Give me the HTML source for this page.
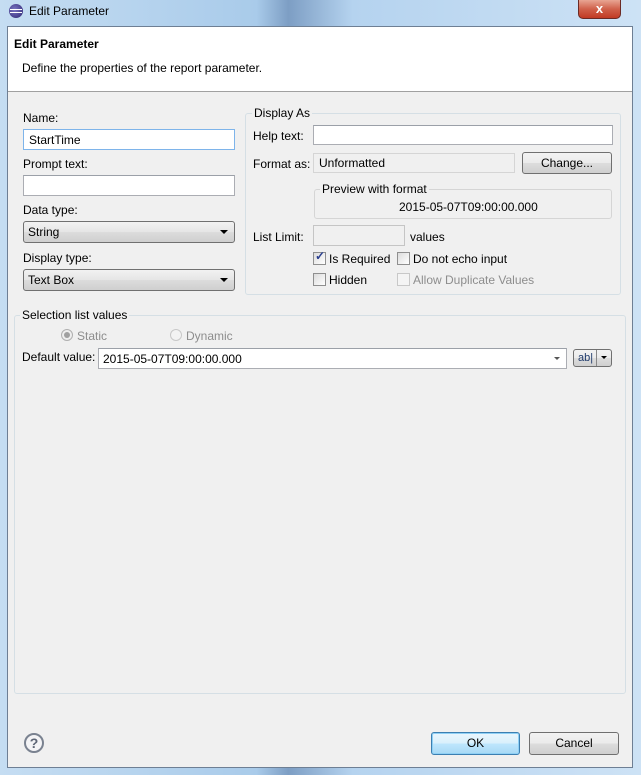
<!DOCTYPE html>
<html><head><style>
*{box-sizing:border-box;margin:0;padding:0}
body{width:641px;height:775px;position:relative;overflow:hidden;font-family:"Liberation Sans",sans-serif;font-size:12px;color:#000;background:#b9d7f0}
.a{position:absolute}
.frame{left:0;top:0;width:641px;height:775px;background:linear-gradient(90deg,#c5ddf2 0%,#a9cbea 40%,#7d9ec4 45%,#b5d3ef 55%,#cde2f5 100%)}
.inner{left:7px;top:26px;width:626px;height:742px;background:#f0f0f0;border:1px solid #6e7f94}
.hdr{left:8px;top:27px;width:624px;height:65px;background:#fff;border-bottom:1px solid #a0a0a0}
.inp{background:#fff;border:1px solid #abadb3;border-top-color:#9ba0a8}
.dis{background:#f0f0f0;border:1px solid #d5d5d5}
.combo{border:1px solid #707070;border-radius:3px;background:linear-gradient(#f2f2f2,#e5e5e5 50%,#dcdcdc 51%,#cfcfcf);padding-left:4px;line-height:20px}
.arr{position:absolute;right:6px;top:8px;width:0;height:0;border-left:4px solid transparent;border-right:4px solid transparent;border-top:4px solid #000}
.grp{border:1px solid #d5dfe5;border-radius:3px}
.leg{background:#f0f0f0;padding:0 2px}
.cb{width:13px;height:13px;border:1px solid #8f8f8f;background:linear-gradient(135deg,#dcdcdc,#fff)}
.btn{border:1px solid #707070;border-radius:3px;background:linear-gradient(#f2f2f2,#ebebeb 50%,#dddddd 51%,#cfcfcf);text-align:center;line-height:20px}
.gray{color:#8d8d8d}
</style></head><body>
<div class="a frame"></div>
<div class="a" style="left:9px;top:4px;width:14px;height:14px;border-radius:50%;background:radial-gradient(circle at 40% 40%,#7b76c4,#2c2470);"></div>
<div class="a" style="left:10px;top:9px;width:12px;height:1px;background:#fff"></div>
<div class="a" style="left:10px;top:12px;width:12px;height:1px;background:#fff"></div>
<div class="a" style="left:29px;top:4px;font-size:12px">Edit Parameter</div>
<div class="a" style="left:578px;top:0;width:43px;height:19px;border:1px solid #6b2a25;border-top:none;border-radius:0 0 5px 5px;background:linear-gradient(#e8a593,#d0614b 50%,#c13a24);color:#fff;font-weight:bold;text-align:center;line-height:17px;font-size:13px">x</div>
<div class="a inner"></div>
<div class="a hdr"></div>
<div class="a" style="left:14px;top:37px;font-weight:bold">Edit Parameter</div>
<div class="a" style="left:22px;top:61px">Define the properties of the report parameter.</div>

<div class="a" style="left:23px;top:111px">Name:</div>
<div class="a inp" style="left:23px;top:129px;width:212px;height:21px;border-color:#7eb4ea;padding:3px 5px">StartTime</div>
<div class="a" style="left:23px;top:157px">Prompt text:</div>
<div class="a inp" style="left:23px;top:175px;width:212px;height:21px"></div>
<div class="a" style="left:23px;top:203px">Data type:</div>
<div class="a combo" style="left:23px;top:221px;width:212px;height:22px">String<div class="arr"></div></div>
<div class="a" style="left:23px;top:251px">Display type:</div>
<div class="a combo" style="left:23px;top:269px;width:212px;height:22px">Text Box<div class="arr"></div></div>

<div class="a grp" style="left:245px;top:113px;width:376px;height:182px"></div>
<div class="a leg" style="left:252px;top:106px">Display As</div>
<div class="a" style="left:253px;top:129px">Help text:</div>
<div class="a inp" style="left:313px;top:125px;width:300px;height:20px"></div>
<div class="a" style="left:253px;top:157px">Format as:</div>
<div class="a dis" style="left:313px;top:153px;width:202px;height:20px;padding:2px 5px">Unformatted</div>
<div class="a btn" style="left:522px;top:152px;width:90px;height:22px">Change...</div>
<div class="a grp" style="left:314px;top:189px;width:298px;height:30px;border-color:#d5d5d5"></div>
<div class="a leg" style="left:320px;top:182px">Preview with format</div>
<div class="a" style="left:399px;top:200px">2015-05-07T09:00:00.000</div>
<div class="a" style="left:253px;top:230px">List Limit:</div>
<div class="a dis" style="left:313px;top:225px;width:92px;height:21px;border-color:#c5c5c5"></div>
<div class="a" style="left:410px;top:230px">values</div>
<div class="a cb" style="left:313px;top:252px"></div>
<div class="a" style="left:315px;top:249px;color:#2a3f8f;font-size:12px;font-weight:bold">✓</div>
<div class="a" style="left:329px;top:252px">Is Required</div>
<div class="a cb" style="left:397px;top:252px"></div>
<div class="a" style="left:413px;top:252px">Do not echo input</div>
<div class="a cb" style="left:313px;top:273px"></div>
<div class="a" style="left:329px;top:273px">Hidden</div>
<div class="a cb" style="left:397px;top:273px;border-color:#c8c8c8;background:#f4f4f4"></div>
<div class="a gray" style="left:413px;top:273px">Allow Duplicate Values</div>

<div class="a grp" style="left:14px;top:315px;width:612px;height:379px"></div>
<div class="a leg" style="left:20px;top:308px">Selection list values</div>
<div class="a" style="left:61px;top:329px;width:12px;height:12px;border-radius:50%;border:1px solid #b0b0b0;background:#eee"></div>
<div class="a" style="left:64px;top:332px;width:6px;height:6px;border-radius:50%;background:#a0a0a0"></div>
<div class="a gray" style="left:77px;top:329px">Static</div>
<div class="a" style="left:170px;top:329px;width:12px;height:12px;border-radius:50%;border:1px solid #c8c8c8;background:#f3f3f3"></div>
<div class="a gray" style="left:186px;top:329px">Dynamic</div>
<div class="a" style="left:22px;top:350px">Default value:</div>
<div class="a inp" style="left:98px;top:348px;width:469px;height:21px;padding:3px 4px">2015-05-07T09:00:00.000</div>
<div class="a" style="left:554px;top:357px;width:0;height:0;border-left:3px solid transparent;border-right:3px solid transparent;border-top:3px solid #555"></div>
<div class="a btn" style="left:573px;top:349px;width:39px;height:18px;line-height:16px;font-size:11px;text-align:left;padding-left:4px;color:#1f3a6b">ab|</div>
<div class="a" style="left:596px;top:350px;width:1px;height:16px;background:#888"></div>
<div class="a" style="left:601px;top:356px;width:0;height:0;border-left:3px solid transparent;border-right:3px solid transparent;border-top:3px solid #000"></div>

<div class="a" style="left:24px;top:733px;width:20px;height:20px;border-radius:50%;border:2px solid #7a8290;background:#f4f4f6;color:#5e6676;font-weight:bold;text-align:center;line-height:16px;font-size:14px">?</div>
<div class="a btn" style="left:431px;top:732px;width:89px;height:23px;border-color:#3c7fb1;background:linear-gradient(#eaf6fd,#d9f0fc 50%,#bee6fd 51%,#a7d9f5);box-shadow:inset 0 0 0 1px #8fd0f5;line-height:21px">OK</div>
<div class="a btn" style="left:529px;top:732px;width:90px;height:23px;line-height:21px">Cancel</div>
</body></html>
